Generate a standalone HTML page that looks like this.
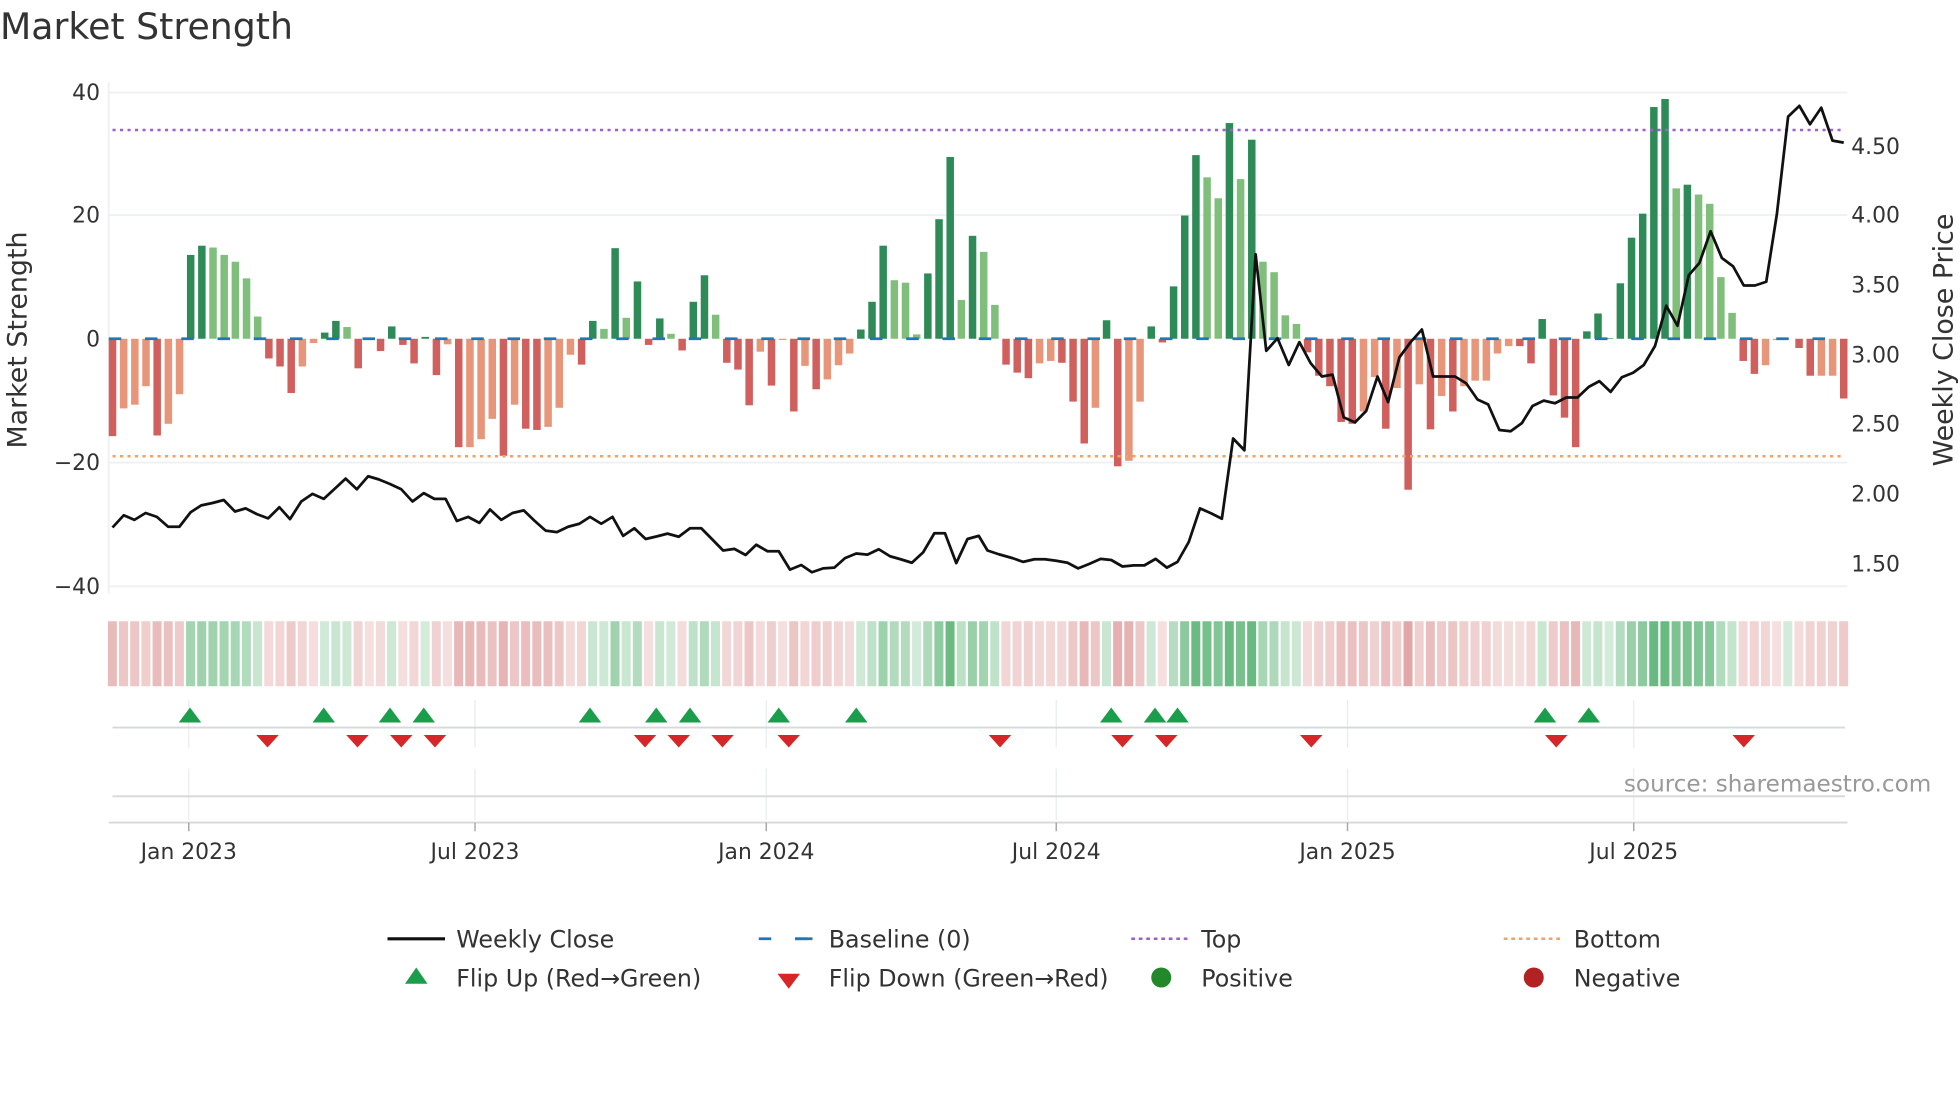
<!DOCTYPE html>
<html><head><meta charset="utf-8">
<style>
html,body{margin:0;padding:0;background:#fff;overflow:hidden}
svg{display:block}
text{font-family:"DejaVu Sans","Liberation Sans",sans-serif;fill:#333}
</style></head>
<body>
<svg id="s" width="1960" height="1102" viewBox="0 0 1568 881.6" xmlns="http://www.w3.org/2000/svg">
<text x="0" y="31" font-size="29">Market Strength</text>
<g stroke="#eef1f4" stroke-width="1.5">
<line x1="87" y1="74" x2="1478" y2="74"/><line x1="87" y1="172" x2="1478" y2="172"/>
<line x1="87" y1="370" x2="1478" y2="370"/><line x1="87" y1="469" x2="1478" y2="469"/>
<line x1="87" y1="66" x2="87" y2="475"/>
</g>
<g font-size="17.5" text-anchor="end">
<text x="80" y="80">40</text><text x="80" y="178">20</text><text x="80" y="277">0</text>
<text x="80" y="376">−20</text><text x="80" y="475">−40</text>
</g>
<g font-size="17.5">
<text x="1481" y="123">4.50</text><text x="1481" y="178">4.00</text><text x="1481" y="234">3.50</text>
<text x="1481" y="290">3.00</text><text x="1481" y="345">2.50</text><text x="1481" y="401">2.00</text><text x="1481" y="457">1.50</text>
</g>
<text transform="translate(21,272) rotate(-90)" font-size="21.5" text-anchor="middle">Market Strength</text>
<text transform="translate(1562,272) rotate(-90)" font-size="21.5" text-anchor="middle">Weekly Close Price</text>
<g id="bars"></g>
<line x1="87" y1="271" x2="1478" y2="271" stroke="#1f77b4" stroke-width="2.2" stroke-dasharray="10,19"/>
<line x1="90" y1="104" x2="1476" y2="104" stroke="#9c5fd6" stroke-width="2" stroke-dasharray="2.5,3.5"/>
<line x1="90" y1="365" x2="1476" y2="365" stroke="#f4a261" stroke-width="2" stroke-dasharray="2.5,3.5"/>
<g id="price" fill="none" stroke="#111" stroke-width="2.2" stroke-linejoin="round"></g>
<g id="heat"></g>
<g stroke="#e8ebf0" stroke-width="1">
<line x1="151" y1="560" x2="151" y2="598"/><line x1="380" y1="560" x2="380" y2="598"/><line x1="613" y1="560" x2="613" y2="598"/>
<line x1="845" y1="560" x2="845" y2="598"/><line x1="1078" y1="560" x2="1078" y2="598"/><line x1="1307" y1="560" x2="1307" y2="598"/>
<line x1="151" y1="615" x2="151" y2="656"/><line x1="380" y1="615" x2="380" y2="656"/><line x1="613" y1="615" x2="613" y2="656"/>
<line x1="845" y1="615" x2="845" y2="656"/><line x1="1078" y1="615" x2="1078" y2="656"/><line x1="1307" y1="615" x2="1307" y2="656"/>
</g>
<line x1="90" y1="582" x2="1476" y2="582" stroke="#d5d8dd" stroke-width="1.5"/>
<line x1="90" y1="637" x2="1476" y2="637" stroke="#d5d8dd" stroke-width="1.5"/>
<line x1="87" y1="658" x2="1478" y2="658" stroke="#d5d8dd" stroke-width="1.5"/>
<g stroke="#aaa" stroke-width="1.2">
<line x1="151" y1="658" x2="151" y2="665"/><line x1="380" y1="658" x2="380" y2="665"/><line x1="613" y1="658" x2="613" y2="665"/>
<line x1="845" y1="658" x2="845" y2="665"/><line x1="1078" y1="658" x2="1078" y2="665"/><line x1="1307" y1="658" x2="1307" y2="665"/>
</g>
<g id="marks"></g>
<g font-size="17.5" text-anchor="middle">
<text x="151" y="687">Jan 2023</text><text x="380" y="687">Jul 2023</text><text x="613" y="687">Jan 2024</text>
<text x="845" y="687">Jul 2024</text><text x="1078" y="687">Jan 2025</text><text x="1307" y="687">Jul 2025</text>
</g>
<text x="1545" y="633" font-size="18.5" text-anchor="end" style="fill:#999">source: sharemaestro.com</text>
<g font-size="19">
<line x1="310" y1="751" x2="356" y2="751" stroke="#111" stroke-width="2.5"/><text x="365" y="758">Weekly Close</text>
<line x1="607" y1="751" x2="652" y2="751" stroke="#1f77b4" stroke-width="2.2" stroke-dasharray="10,19"/><line x1="636" y1="751" x2="650" y2="751" stroke="#1f77b4" stroke-width="2.2"/><text x="663" y="758">Baseline (0)</text>
<line x1="905" y1="751" x2="950" y2="751" stroke="#9c5fd6" stroke-width="2" stroke-dasharray="3,3"/><text x="961" y="758">Top</text>
<line x1="1203" y1="751" x2="1248" y2="751" stroke="#f4a261" stroke-width="2" stroke-dasharray="3,3"/><text x="1259" y="758">Bottom</text>
<polygon points="333,774 342,787 324,787" fill="#1a9e4b"/><text x="365" y="789">Flip Up (Red→Green)</text>
<polygon points="622,779 640,779 631,791" fill="#d62728"/><text x="663" y="789">Flip Down (Green→Red)</text>
<circle cx="929" cy="782" r="8" fill="#22882a"/><text x="961" y="789">Positive</text>
<circle cx="1227" cy="782" r="8" fill="#b22222"/><text x="1259" y="789">Negative</text>
</g>
</svg>
<script>
var NS="http://www.w3.org/2000/svg";
function el(t,a,p){var e=document.createElementNS(NS,t);for(var k in a)e.setAttribute(k,a[k]);p.appendChild(e);return e;}
var v=[[-15.8,1],[-11.3,0],[-10.7,0],[-7.7,0],[-15.7,1],[-13.8,0],[-9,0],[13.6,1],[15.1,1],[14.8,0],[13.6,0],[12.5,0],[9.8,0],[3.6,0],[-3.2,1],[-4.5,1],[-8.8,1],[-4.5,0],[-0.7,0],[1,1],[2.9,1],[1.9,0],[-4.8,1],[-0.2,0],[-2,1],[2,1],[-1,1],[-4,1],[0.3,1],[-5.9,1],[-0.9,0],[-17.6,1],[-17.6,0],[-16.3,0],[-13,0],[-19,1],[-10.7,0],[-14.6,1],[-14.8,1],[-14.3,0],[-11.2,0],[-2.6,0],[-4.2,1],[2.9,1],[1.6,0],[14.7,1],[3.4,0],[9.3,1],[-1,1],[3.3,1],[0.8,0],[-1.9,1],[6,1],[10.3,1],[3.9,0],[-3.9,1],[-5,1],[-10.8,1],[-2.1,0],[-7.6,1],[-0.2,0],[-11.8,1],[-4.4,0],[-8.2,1],[-6.6,0],[-4.3,0],[-2.4,0],[1.5,1],[6,1],[15.1,1],[9.5,0],[9.1,0],[0.7,0],[10.6,1],[19.4,1],[29.5,1],[6.3,0],[16.7,1],[14.1,0],[5.5,0],
[-4.2,1],[-5.5,1],[-6.4,1],[-4,0],[-3.6,0],[-3.9,1],[-10.2,1],[-17,1],[-11.2,0],[3,1],[-20.7,1],[-19.8,0],[-10.2,0],[2,1],[-0.6,1],[8.5,1],[20,1],[29.8,1],[26.2,0],[22.8,0],[35,1],[25.9,0],[32.3,1],[12.5,0],[10.8,0],[3.8,0],[2.4,0],[-2.2,1],[-6,1],[-7.7,1],[-13.5,1],[-13.8,1],[-11.8,0],[-6.2,0],[-14.6,1],[-8,0],[-24.5,1],[-7.4,0],[-14.7,1],[-9.3,0],[-11.8,1],[-7.7,0],[-6.8,0],[-6.8,0],[-2.4,0],[-1.2,0],[-1.2,1],[-4,1],[3.2,1],[-9.2,1],[-12.8,1],[-17.6,1],[1.2,1],[4.1,1],[0.1,1],[9,1],[16.4,1],[20.3,1],[37.6,1],[38.9,1],[24.4,0],[25,1],[23.4,0],[21.9,0],[10,0],[4.2,0],[-3.6,1],[-5.7,1],[-4.3,0],[-0.2,0],[0,0],[-1.5,1],[-6,1],[-6,0],[-6,0],[-9.7,1]];
var B=document.getElementById("bars"),H=document.getElementById("heat"),n=v.length,step=(1475-90)/(n-1);
for(var i=0;i<n;i++){var x=90+i*step,val=v[i][0],d=v[i][1],h=Math.abs(val)*4.93,y=val>0?271-h:271;
 var c=val>0?(d?"#2e8b57":"#7fbf7b"):(d?"#d0605e":"#e8967a");
 if(h>0.3)el("rect",{x:x-3,y:y,width:6,height:h},B).setAttribute("fill",c);
 var a=Math.min(Math.abs(val)/30,1),col;
 if(val>=0){col="rgba(60,165,90,"+(0.22+0.55*a)+")";}else{col="rgba(205,100,100,"+(0.2+0.45*a)+")";}
 el("rect",{x:x-3.7,y:497,width:7.2,height:52,fill:col},H);}
var p1=[[180,1380],[198,1348],[215,1360],[233,1342],[251,1352],[269,1378],[287,1378],[305,1340],[322,1322],[340,1316],[358,1308],[376,1338],[393,1330],[411,1345],[429,1356],[447,1327],[464,1358],[482,1312],[500,1292],[518,1305],[536,1278],[553,1252],[571,1280],[589,1246],[606,1254],[624,1266],[642,1280],[660,1312],[678,1290],[695,1305],[713,1305],[731,1363],[749,1352],[767,1368],[784,1333],[802,1360],[820,1342],[838,1335],[855,1362],[873,1388],[891,1392],[909,1378],[927,1370],[944,1352],[962,1370],[980,1352],[997,1402],[1015,1382],[1033,1410],[1051,1403],[1068,1396],[1086,1404],[1104,1382],[1122,1382],[1139,1410],[1157,1440],[1175,1436],[1193,1452],[1210,1425],[1228,1442],[1246,1442],[1264,1490],[1282,1478],[1299,1497],[1317,1487],[1335,1485],[1352,1460],[1370,1448],[1388,1451],[1406,1437],[1424,1455],[1441,1463],[1459,1472],[1477,1445],[1495,1395],[1512,1395],[1530,1473],[1548,1410],[1566,1402]];
var p2=[[12,1440],[30,1450],[52,1460],[69,1470],[87,1463],[104,1463],[122,1467],[140,1472],[157,1487],[175,1475],[193,1462],[210,1465],[228,1482],[246,1479],[263,1479],[281,1462],[299,1485],[316,1470],[334,1418],[352,1330],[370,1343],[387,1357],[405,1147],[423,1178],[441,665],[458,918],[476,885],[494,955],[511,895],[529,950],[547,985],[564,980],[582,1092],[600,1105],[618,1075],[636,985],[653,1052],[671,935],[689,895],[707,862],[725,985],[742,985],[760,985],[778,1003],[796,1045],[813,1058],[831,1125],[849,1128],[867,1107],[884,1062],[902,1048],[920,1055],[938,1040],[956,1040],[974,1012],[991,997],[1009,1025],[1027,987],[1045,975],[1062,955],[1080,905],[1098,800],[1116,852],[1134,720],[1151,688],[1169,605],[1187,675],[1205,697],[1222,747],[1240,747],[1258,737],[1275,560],[1293,305],[1311,277],[1328,325],[1346,282],[1364,368],[1382,373]];
var pts=[];p1.forEach(function(p){pts.push((p[0]/2).toFixed(1)+","+(p[1]/3.27).toFixed(1));});
p2.forEach(function(p){pts.push((784+p[0]/2).toFixed(1)+","+(p[1]/3.27).toFixed(1));});
el("polyline",{points:pts.join(" ")},document.getElementById("price"));
var M=document.getElementById("marks");
[152,259,312,339,472,525,552,623,685,889,924,942,1236,1271].forEach(function(x){el("polygon",{points:x+",566 "+(x+9)+",578 "+(x-9)+",578",fill:"#1a9e4b"},M);});
[214,286,321,348,516,543,578,631,800,898,933,1049,1245,1395].forEach(function(x){el("polygon",{points:(x-9)+",588 "+(x+9)+",588 "+x+",598",fill:"#d62728"},M);});
</script>
</body></html>
